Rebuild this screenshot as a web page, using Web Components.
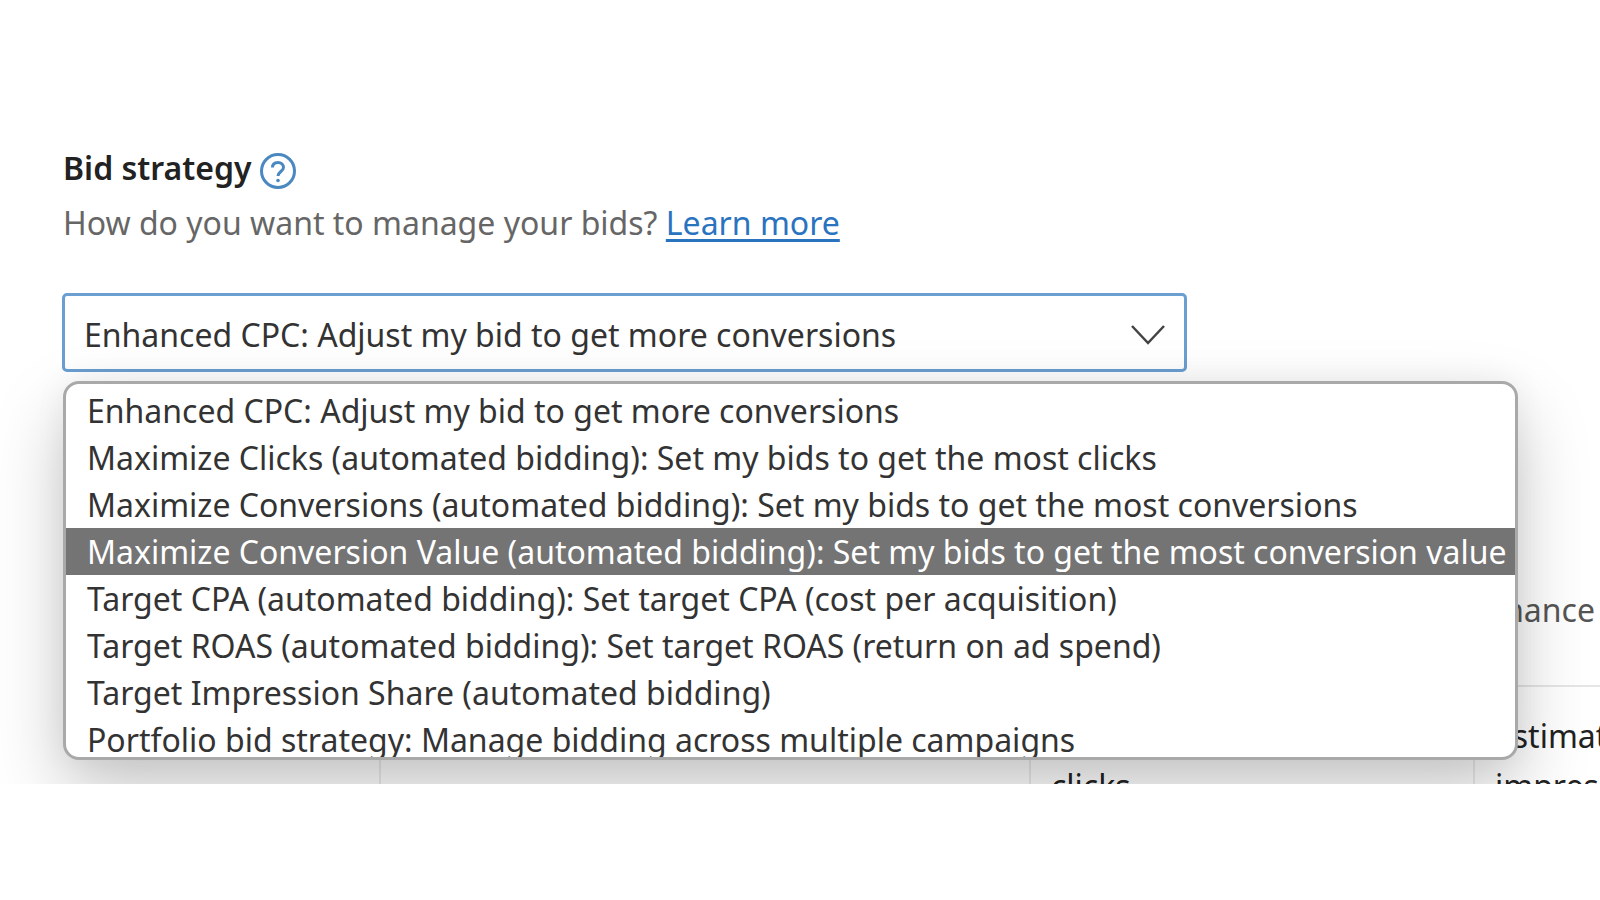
<!DOCTYPE html>
<html lang="en">
<head>
<meta charset="utf-8">
<title>Bid strategy</title>
<style>
    body {
        margin: 0;
        background: #fff;
        color: #333;
        font-family: "Noto Sans", "Open Sans", sans-serif;
        font-size: 32px;
        line-height: 47px;
    }
</style>
</head>
<body>
<bid-panel>
    <field-heading>
        Bid strategy
        <span slot="hint">How do you want to manage your bids?</span>
    </field-heading>
    <bid-select></bid-select>
    <estimate-table></estimate-table>
</bid-panel>

<script>
const STRATEGIES = [
    'Enhanced CPC: Adjust my bid to get more conversions',
    'Maximize Clicks (automated bidding): Set my bids to get the most clicks',
    'Maximize Conversions (automated bidding): Set my bids to get the most conversions',
    'Maximize Conversion Value (automated bidding): Set my bids to get the most conversion value',
    'Target CPA (automated bidding): Set target CPA (cost per acquisition)',
    'Target ROAS (automated bidding): Set target ROAS (return on ad spend)',
    'Target Impression Share (automated bidding)',
    'Portfolio bid strategy: Manage bidding across multiple campaigns'
];

class BidPanel extends HTMLElement {
    constructor() {
        super();
        this.attachShadow({ mode: 'open' });
    }

    connectedCallback() {
        this.shadowRoot.innerHTML = `
            <style>
                :host {
                    display: flex;
                    flex-direction: column;
                    box-sizing: border-box;
                    height: calc(100vh - 116px);
                    padding: 144px 0 0 62px;
                    overflow: hidden;
                }
            </style>
            <slot></slot>
        `;
    }
}

class FieldHeading extends HTMLElement {
    constructor() {
        super();
        this.attachShadow({ mode: 'open' });
    }

    connectedCallback() {
        this.shadowRoot.innerHTML = `
            <style>
                :host {
                    display: block;
                    flex: none;
                    padding-left: 1px;
                }
                .title {
                    display: flex;
                    align-items: center;
                    gap: 8px;
                }
                h2 {
                    margin: 0;
                    color: #222;
                    font-size: 32px;
                    font-weight: 600;
                }
                button {
                    display: flex;
                    padding: 6px 0 0;
                    border: 0;
                    background: none;
                    cursor: pointer;
                }
                p {
                    margin: 8px 0 0;
                    color: #666;
                }
                a {
                    color: #2a74bf;
                    text-decoration-thickness: 3px;
                    text-underline-offset: 4px;
                }
            </style>
            <div class="title">
                <h2><slot></slot></h2>
                <button type="button" aria-label="Help">
                    <svg width="36" height="36" viewBox="0 0 36 36" fill="none" stroke="#4a88c2" stroke-width="3">
                        <circle cx="18" cy="18" r="16.5"/>
                        <path d="M12.5 14.5C12.5 11 15 9.5 18 9.5S23.5 11.5 23.5 14.5C23.5 18.5 18 18.5 18 23"/>
                        <circle cx="18" cy="27.5" r="1.8" fill="#4a88c2" stroke="none"/>
                    </svg>
                </button>
            </div>
            <p><slot name="hint"></slot> <a href="#">Learn more</a></p>
        `;
    }
}

class BidSelect extends HTMLElement {
    constructor() {
        super();
        this.attachShadow({ mode: 'open' });
        this.active = 3;
    }

    connectedCallback() {
        this.render();
    }

    render() {
        this.shadowRoot.innerHTML = `
            <style>
                :host {
                    display: block;
                    flex: none;
                    position: relative;
                    z-index: 1;
                    margin-top: 47px;
                }
                .control {
                    display: grid;
                    align-items: center;
                    max-width: 1125px;
                }
                .control > * {
                    grid-area: 1 / 1;
                }
                select {
                    appearance: none;
                    box-sizing: border-box;
                    width: 100%;
                    height: 79px;
                    padding: 4px 64px 0 19px;
                    border: 3px solid #6b9fd2;
                    border-radius: 5px;
                    outline: 0;
                    background: #fff;
                    color: inherit;
                    font: inherit;
                }
                svg {
                    justify-self: end;
                    margin: 4px 21px 0 0;
                    pointer-events: none;
                }
                .menu {
                    position: absolute;
                    top: 88px;
                    left: 1px;
                    right: 82px;
                    box-sizing: border-box;
                    height: 379px;
                    margin: 0;
                    padding: 3px 0 0;
                    border: 3px solid #a9a9a9;
                    border-radius: 16px;
                    overflow: hidden;
                    background: #fff;
                    box-shadow: 0 32px 72px rgba(0, 0, 0, 0.22), 0 0 32px rgba(0, 0, 0, 0.06);
                    list-style: none;
                }
                .menu li {
                    padding-left: 21px;
                    white-space: nowrap;
                }
                .menu li[aria-selected="true"] {
                    background: #747474;
                    color: #fff;
                }
            </style>
            <div class="control">
                <select aria-label="Bid strategy">
                    ${STRATEGIES.map(s => `<option>${s}</option>`).join('')}
                </select>
                <svg width="36" height="24" viewBox="0 0 36 24" fill="none" stroke="#444" stroke-width="2.5">
                    <path d="M2 3L18 20L34 3"/>
                </svg>
            </div>
            <ul class="menu" role="listbox" aria-label="Bid strategies">
                ${STRATEGIES.map((s, i) => `<li role="option" aria-selected="${i === this.active}">${s}</li>`).join('')}
            </ul>
        `;
    }
}

class EstimateTable extends HTMLElement {
    constructor() {
        super();
        this.attachShadow({ mode: 'open' });
    }

    connectedCallback() {
        this.shadowRoot.innerHTML = `
            <style>
                :host {
                    display: block;
                    flex: none;
                    margin: 214px 0 0 8px;
                }
                table {
                    width: 100%;
                    border-collapse: collapse;
                    table-layout: fixed;
                }
                caption {
                    padding: 0 5px 52px 0;
                    color: #555;
                    text-align: right;
                }
                th {
                    padding: 24px 0 0 20px;
                    border-top: 2px solid #e6e6e6;
                    border-left: 2px solid #ececec;
                    font-weight: 400;
                    line-height: 50px;
                    text-align: left;
                    vertical-align: bottom;
                    white-space: nowrap;
                    color: #222;
                }
                th:first-child {
                    border-left: 0;
                }
            </style>
            <table>
                <caption>Performance</caption>
                <colgroup>
                    <col style="width: 310px">
                    <col>
                    <col style="width: 444px">
                    <col style="width: 126px">
                </colgroup>
                <thead>
                    <tr>
                        <th></th>
                        <th></th>
                        <th>clicks</th>
                        <th>Estimated<br>impressions</th>
                    </tr>
                </thead>
            </table>
        `;
    }
}

customElements.define('bid-panel', BidPanel);
customElements.define('field-heading', FieldHeading);
customElements.define('bid-select', BidSelect);
customElements.define('estimate-table', EstimateTable);
</script>
</body>
</html>
